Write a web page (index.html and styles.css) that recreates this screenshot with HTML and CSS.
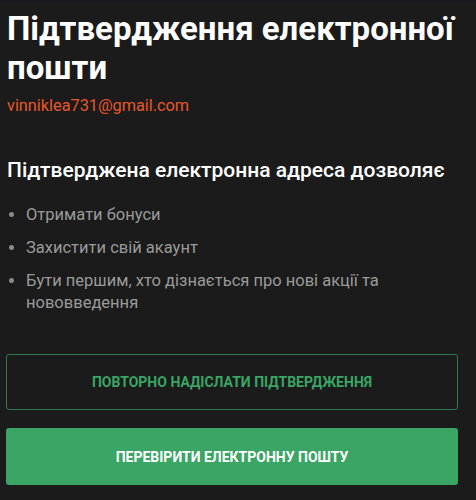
FILE: index.html
```html
<!DOCTYPE html>
<html lang="uk">
<head>
<meta charset="utf-8">
<link rel="stylesheet" href="styles.css">
</head>
<body>
<div class="topbar"></div>
<main class="page">
  <h1 class="title">Підтвердження електронної пошти</h1>
  <p class="email">vinniklea731@gmail.com</p>
  <h2 class="subtitle">Підтверджена електронна адреса дозволяє</h2>
  <ul class="benefits">
    <li>Отримати бонуси</li>
    <li>Захистити свій акаунт</li>
    <li>Бути першим, хто дізнається про нові акції та нововведення</li>
  </ul>
  <div class="actions">
    <button class="btn btn-outline">Повторно надіслати підтвердження</button>
    <button class="btn btn-solid">Перевірити електронну пошту</button>
  </div>
</main>
</body>
</html>
```
FILE: styles.css
```css
html, body {
  margin: 0;
  padding: 0;
  background: #1b1b1b;
  font-family: Roboto, "Noto Sans", sans-serif;
}
.topbar {
  height: 3px;
  background: #161a20;
}
.page {
  padding: 0 18px 0 7px;
}
.title {
  margin: 6px 0 0;
  font-size: 33px;
  line-height: 39px;
  font-weight: 700;
  color: #ffffff;
}
.email {
  margin: 9px 0 0;
  font-size: 16.3px;
  line-height: 20px;
  color: #e8572b;
}
.subtitle {
  margin: 41px 0 0;
  font-size: 21px;
  line-height: 26px;
  font-weight: 500;
  color: #ffffff;
}
.benefits {
  margin: 21px 0 0;
  padding: 0 0 0 19px;
  display: flex;
  flex-direction: column;
  gap: 11px;
  color: #9a9a9a;
  font-size: 16.5px;
  line-height: 22px;
}
.benefits li::marker {
  color: #8a8a8a;
}
.actions {
  margin: 40px 0 0 -1px;
  display: flex;
  flex-direction: column;
  gap: 18px;
}
.btn {
  width: 452px;
  height: 56px;
  border-radius: 3px;
  font-family: Roboto, sans-serif;
  font-size: 14px;
  font-weight: 700;
  text-transform: uppercase;
  cursor: pointer;
}
.btn-outline {
  background: transparent;
  border: 1.5px solid #2f7b4d;
  color: #3aa564;
}
.btn-solid {
  height: 57px;
  background: #3aa564;
  border: none;
  color: #ffffff;
}
```
